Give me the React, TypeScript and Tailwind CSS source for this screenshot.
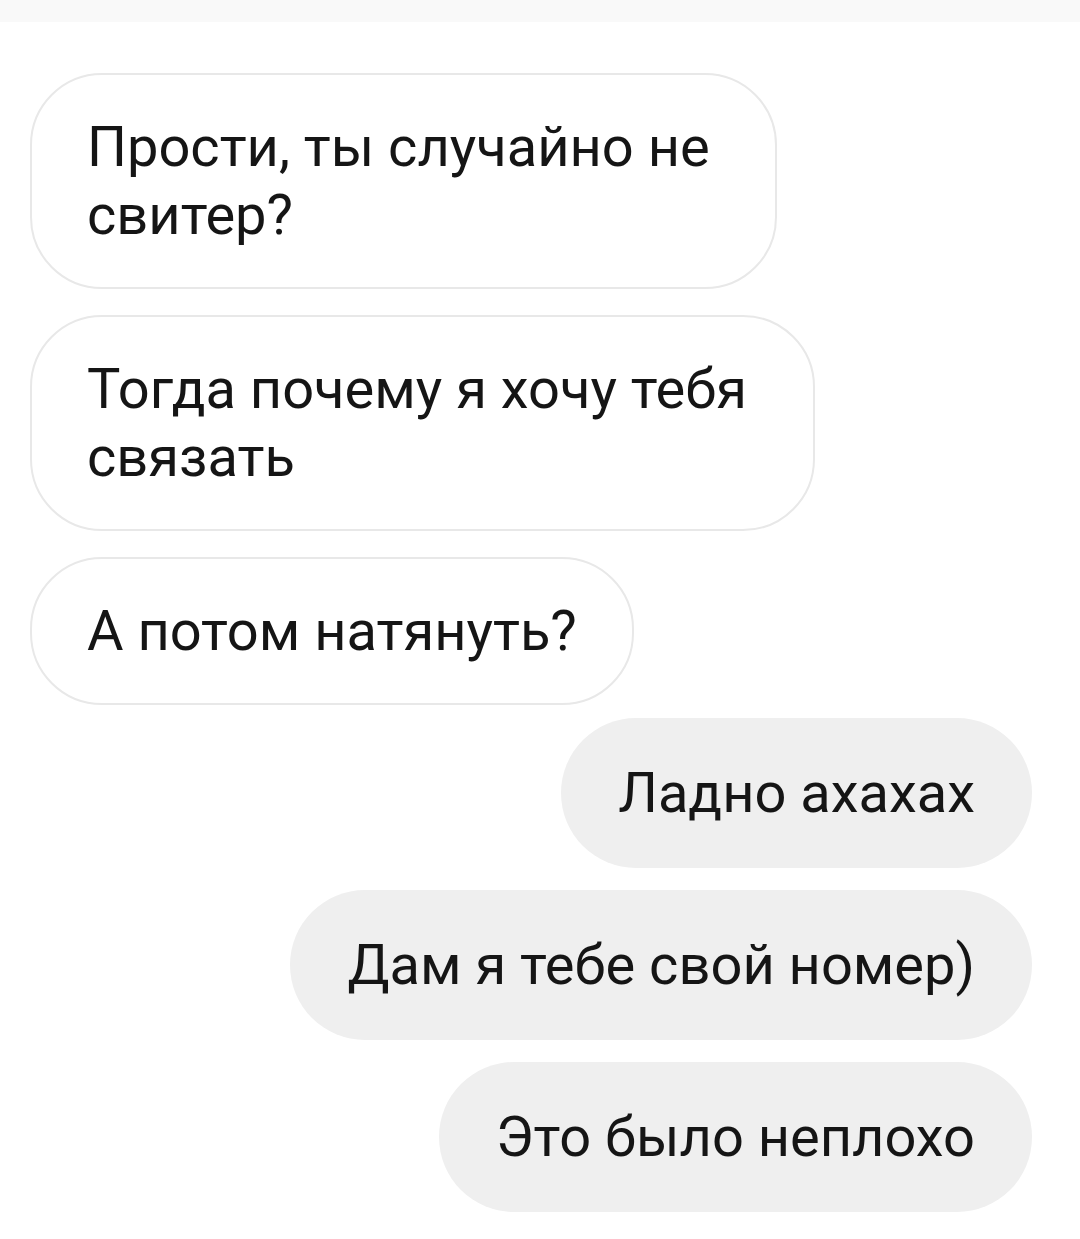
import React from 'react';

type Msg = { text: string; mine: boolean; width?: string; gap: string };

const messages: Msg[] = [
  { text: 'Прости, ты случайно не свитер?', mine: false, width: 'w-[747px]', gap: 'mt-[51px]' },
  { text: 'Тогда почему я хочу тебя связать', mine: false, width: 'w-[785px]', gap: 'mt-[26px]' },
  { text: 'А потом натянуть?', mine: false, gap: 'mt-[26px]' },
  { text: 'Ладно ахахах', mine: true, gap: 'mt-[13px]' },
  { text: 'Дам я тебе свой номер)', mine: true, gap: 'mt-[22px]' },
  { text: 'Это было неплохо', mine: true, gap: 'mt-[22px]' },
];

const Bubble: React.FC<{ msg: Msg }> = ({ msg }) => {
  if (msg.mine) {
    return (
      <div className={`flex justify-end pr-[48px] ${msg.gap}`}>
        <div className="rounded-full bg-[#efefef] px-[57px] py-[41px] text-[56px] leading-[68px] text-[#151515]">
          {msg.text}
        </div>
      </div>
    );
  }
  return (
    <div className={`flex justify-start pl-[30px] ${msg.gap}`}>
      <div
        className={`${msg.width ?? ''} rounded-[72px] border-2 border-[#e8e8e8] bg-white px-[55px] py-[38px] text-[56px] leading-[68px] text-[#151515]`}
      >
        {msg.text}
      </div>
    </div>
  );
};

export default function App() {
  return (
    <div className="min-h-[1239px] w-[1080px] bg-white font-['Roboto','Liberation_Sans',sans-serif]">
      <div className="h-[22px] bg-[#f9f9f9]" />
      {messages.map((m, i) => (
        <Bubble key={i} msg={m} />
      ))}
    </div>
  );
}
